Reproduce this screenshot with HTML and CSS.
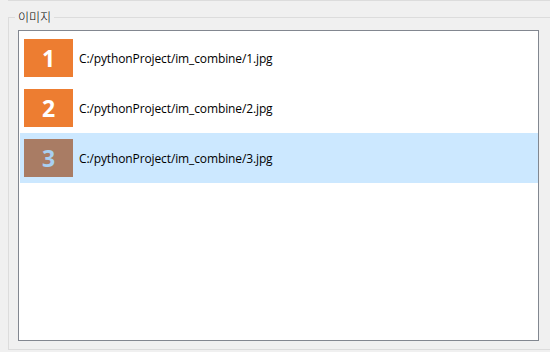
FILE: index.html
```html
<!DOCTYPE html>
<html>
<head>
<meta charset="utf-8">
<link rel="stylesheet" href="styles.css">
</head>
<body>
<div class="topline"></div>
<fieldset class="group">
  <legend class="group-title">이미지</legend>
  <div class="list">
    <div class="row">
      <div class="badge">1</div>
      <span class="path">C:/pythonProject/im_combine/1.jpg</span>
    </div>
    <div class="row">
      <div class="badge">2</div>
      <span class="path">C:/pythonProject/im_combine/2.jpg</span>
    </div>
    <div class="row selected">
      <div class="badge">3</div>
      <span class="path">C:/pythonProject/im_combine/3.jpg</span>
    </div>
  </div>
</fieldset>
</body>
</html>
```
FILE: styles.css
```css
html, body {
  margin: 0;
  padding: 0;
}
body {
  width: 550px;
  height: 352px;
  overflow: hidden;
  background: #f0f0f0;
  font-family: "Open Sans", "Noto Sans", sans-serif;
  font-size: 12px;
  color: #000;
}
.topline {
  margin-left: 8px;
  border-top: 1px solid #dcdcdc;
}
.group {
  margin: 7px 0 0 8px;
  padding: 0 0 8px 9px;
  width: 560px;
  box-sizing: border-box;
  border: 1px solid #dcdcdc;
  min-width: 0;
}
.group-title {
  font-family: "Noto Sans CJK KR", sans-serif;
  font-size: 12px;
  font-weight: 300;
  line-height: 18px;
  padding: 0 3px;
  margin-left: -3px;
  color: #000;
}
.list {
  width: 521px;
  height: 311px;
  box-sizing: border-box;
  border: 1px solid #828790;
  background: #fff;
  padding: 2px 0 0 1px;
  margin-top: 4px;
}
.row {
  height: 50px;
  display: flex;
  align-items: center;
  padding-left: 4px;
  gap: 6px;
}
.row.selected {
  background: #cce8ff;
}
.badge {
  width: 49px;
  height: 38px;
  background: #ed7d31;
  color: #fff;
  font-family: "Open Sans", sans-serif;
  font-weight: 700;
  font-size: 23px;
  display: flex;
  align-items: center;
  justify-content: center;
}
.row.selected .badge {
  background: #a97c64;
  color: #a8d0f2;
}
.path {
  white-space: nowrap;
  letter-spacing: -0.12px;
}
```
